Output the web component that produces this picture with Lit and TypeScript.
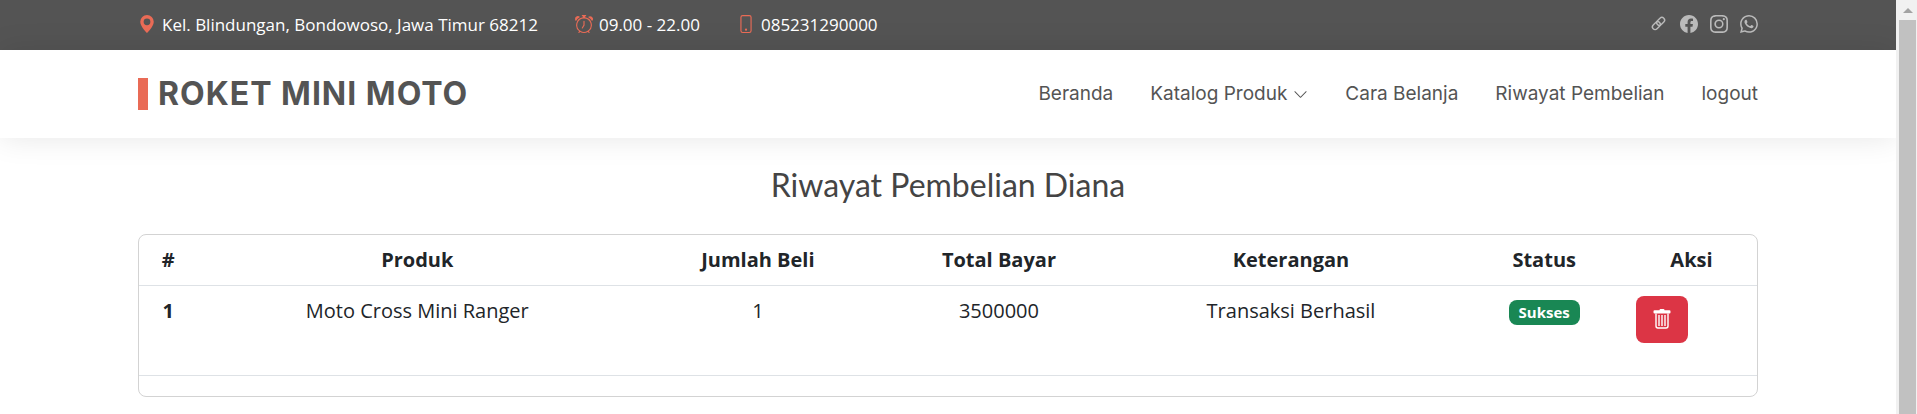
import { LitElement, html, css, svg } from "lit";
import { customElement } from "lit/decorators.js";

const icon = (size: number, body: unknown, box = 16) =>
  html`<svg class="icon" width=${size} height=${size} viewBox="0 0 ${box} ${box}" fill="currentColor" aria-hidden="true">${body}</svg>`;

const pin = svg`<path d="M8 16s6-5.686 6-10A6 6 0 0 0 2 6c0 4.314 6 10 6 10zm0-7a3 3 0 1 1 0-6 3 3 0 0 1 0 6z"/>`;
const alarm = svg`<path d="M8.5 5.5a.5.5 0 0 0-1 0v3.362l-1.429 2.38a.5.5 0 1 0 .858.515l1.5-2.5A.5.5 0 0 0 8.5 9V5.5z"/><path d="M6.5 0a.5.5 0 0 0 0 1H7v1.07a7.001 7.001 0 0 0-3.273 12.474l-.602.602a.5.5 0 0 0 .707.708l.746-.746A6.97 6.97 0 0 0 8 16a6.97 6.97 0 0 0 3.422-.892l.746.746a.5.5 0 0 0 .707-.708l-.601-.602A7.001 7.001 0 0 0 9 2.07V1h.5a.5.5 0 0 0 0-1h-3zm1.038 3.018a6.093 6.093 0 0 1 .924 0 6 6 0 1 1-.924 0zM0 3.5c0 .753.333 1.429.86 1.887A8.035 8.035 0 0 1 4.387 1.86 2.5 2.5 0 0 0 0 3.5zM13.5 1c-.753 0-1.429.333-1.887.86a8.035 8.035 0 0 1 3.527 3.527A2.5 2.5 0 0 0 13.5 1z"/>`;
const phone = svg`<path d="M11 1a1 1 0 0 1 1 1v12a1 1 0 0 1-1 1H5a1 1 0 0 1-1-1V2a1 1 0 0 1 1-1h6zM5 0a2 2 0 0 0-2 2v12a2 2 0 0 0 2 2h6a2 2 0 0 0 2-2V2a2 2 0 0 0-2-2H5z"/><path d="M8 14a1 1 0 1 0 0-2 1 1 0 0 0 0 2z"/>`;
const link = svg`<g fill="none" stroke="currentColor" stroke-width="1.4" transform="rotate(-45 8.5 8.5)"><rect x="1" y="5.800" width="9" height="5.400" rx="2.700"/><rect x="7" y="5.800" width="9" height="5.400" rx="2.700"/></g>`;
const facebook = svg`<path d="M16 8.049c0-4.446-3.582-8.05-8-8.05C3.580 0-.002 3.603-.002 8.050c0 4.017 2.926 7.347 6.750 7.951v-5.625h-2.030V8.050H6.750V6.275c0-2.017 1.195-3.131 3.022-3.131.876 0 1.791.157 1.791.157v1.980h-1.009c-.993 0-1.303.621-1.303 1.258v1.510h2.218l-.354 2.326H9.250V16c3.824-.604 6.750-3.934 6.750-7.951z"/>`;
const instagram = svg`<path d="M8 0C5.829 0 5.556.010 4.703.048 3.850.088 3.269.222 2.760.420a3.917 3.917 0 0 0-1.417.923A3.927 3.927 0 0 0 .420 2.760C.222 3.268.087 3.850.048 4.700.010 5.555 0 5.827 0 8.001c0 2.172.010 2.444.048 3.297.040.852.174 1.433.372 1.942.205.526.478.972.923 1.417.444.445.890.719 1.416.923.510.198 1.090.333 1.942.372C5.555 15.990 5.827 16 8 16s2.444-.010 3.298-.048c.851-.040 1.434-.174 1.943-.372a3.916 3.916 0 0 0 1.416-.923c.445-.445.718-.891.923-1.417.197-.509.332-1.090.372-1.942C15.990 10.445 16 10.173 16 8s-.010-2.445-.048-3.299c-.040-.851-.175-1.433-.372-1.941a3.926 3.926 0 0 0-.923-1.417A3.911 3.911 0 0 0 13.240.420c-.510-.198-1.092-.333-1.943-.372C10.443.010 10.172 0 7.998 0h.003zm-.717 1.442h.718c2.136 0 2.389.007 3.232.046.780.035 1.204.166 1.486.275.373.145.640.319.920.599.280.280.453.546.598.920.110.281.240.705.275 1.485.039.843.047 1.096.047 3.231s-.008 2.389-.047 3.232c-.035.780-.166 1.203-.275 1.485a2.470 2.470 0 0 1-.599.919c-.280.280-.546.453-.920.598-.280.110-.704.240-1.485.276-.843.038-1.096.047-3.232.047s-2.390-.009-3.233-.047c-.780-.036-1.203-.166-1.485-.276a2.478 2.478 0 0 1-.920-.598 2.480 2.480 0 0 1-.600-.920c-.109-.281-.240-.705-.275-1.485-.038-.843-.046-1.096-.046-3.233 0-2.136.008-2.388.046-3.231.036-.780.166-1.204.276-1.486.145-.373.319-.640.599-.920.280-.280.546-.453.920-.598.282-.110.705-.240 1.485-.276.738-.034 1.024-.044 2.515-.045v.002zm4.988 1.328a.960.960 0 1 0 0 1.920.960.960 0 0 0 0-1.920zm-4.270 1.122a4.109 4.109 0 1 0 0 8.217 4.109 4.109 0 0 0 0-8.217zm0 1.441a2.667 2.667 0 1 1 0 5.334 2.667 2.667 0 0 1 0-5.334z"/>`;
const whatsapp = svg`<path d="M13.601 2.326A7.854 7.854 0 0 0 7.994 0C3.627 0 .068 3.558.064 7.926c0 1.399.366 2.760 1.057 3.965L0 16l4.204-1.102a7.933 7.933 0 0 0 3.790.965h.004c4.368 0 7.926-3.558 7.930-7.930A7.898 7.898 0 0 0 13.600 2.326zM7.994 14.521a6.573 6.573 0 0 1-3.356-.920l-.240-.144-2.494.654.666-2.433-.156-.251a6.560 6.560 0 0 1-1.007-3.505c0-3.626 2.957-6.584 6.591-6.584a6.560 6.560 0 0 1 4.660 1.931 6.557 6.557 0 0 1 1.928 4.660c-.004 3.639-2.961 6.592-6.592 6.592zm3.615-4.934c-.197-.099-1.170-.578-1.353-.646-.182-.065-.315-.099-.445.099-.133.197-.513.646-.627.775-.114.133-.232.148-.430.050-.197-.100-.836-.308-1.592-.985-.590-.525-.985-1.175-1.103-1.372-.114-.198-.011-.304.088-.403.087-.088.197-.232.296-.346.100-.114.133-.198.198-.330.065-.134.034-.248-.015-.347-.050-.099-.445-1.076-.612-1.470-.160-.389-.323-.335-.445-.340-.114-.007-.247-.007-.380-.007a.729.729 0 0 0-.529.247c-.182.198-.691.677-.691 1.654 0 .977.710 1.916.810 2.049.098.133 1.394 2.132 3.383 2.992.470.205.840.326 1.129.418.475.152.904.129 1.246.080.380-.058 1.171-.480 1.338-.943.164-.464.164-.860.114-.943-.049-.084-.182-.133-.380-.232z"/>`;
const chevron = svg`<path fill-rule="evenodd" d="M1.646 4.646a.5.5 0 0 1 .708 0L8 10.293l5.646-5.647a.5.5 0 0 1 .708.708l-6 6a.5.5 0 0 1-.708 0l-6-6a.5.5 0 0 1 0-.708z"/>`;
const trash = svg`<path d="M7.500 1.200Q7.500 0 8.500 0h3q1 0 1 1.200H17.500q1 0 1 1V3.500q0 1-1 1h-15q-1 0-1-1V2.200q0-1 1-1z"/><path fill="none" stroke="currentColor" stroke-width="1.400" d="M4 4.500V17a2 2 0 0 0 2 2h8a2 2 0 0 0 2-2V4.500M7 6v11M10 6v11M13 6v11"/>`;

@customElement("app-root")
export class AppRoot extends LitElement {
  static styles = css`
    :host {
      display: grid;
      grid-template-columns: minmax(0, 1fr) 21px;
      min-height: 100vh;
      background: #fff;
      color: #212529;
      font: 20px/30px "Open Sans", sans-serif;
    }
    * { box-sizing: border-box; }
    a { color: inherit; text-decoration: none; }
    .icon { display: block; flex: none; }
    .container {
      width: 100%;
      max-width: 1650px;
      margin: 0 auto;
      padding: 0 15px;
    }
    .bar {
      display: flex;
      align-items: center;
      justify-content: space-between;
    }
    .topbar { background: #545454; color: #fff; }
    .topbar .bar { height: 50px; }
    .topbar .icon { margin-bottom: 2px; }
    .contact, .social, .menu {
      display: flex;
      align-items: center;
      margin: 0;
      padding: 0;
      list-style: none;
    }
    .contact { gap: 37px; font-size: 17px; font-style: normal; }
    .contact-item { display: flex; align-items: center; gap: 6px; }
    .contact-item .icon { color: #e96b56; }
    .social { gap: 12px; color: #bababa; }
    .header { box-shadow: 0 0 31px rgba(0, 0, 0, 0.1); }
    .header .bar { height: 88px; }
    .logo {
      margin: 0;
      padding-left: 10px;
      border-left: 10px solid #e96b56;
      color: #545454;
      font: 700 32px/32px Inter, sans-serif;
      letter-spacing: 1px;
    }
    .menu {
      gap: 37px;
      color: #545454;
      font: 19px/28px Inter, sans-serif;
    }
    .menu a { display: flex; align-items: center; gap: 6px; }
    .title {
      margin: 0;
      padding: 29px 0 31px;
      color: #444;
      font: 400 32px/36px Lato, sans-serif;
      text-align: center;
    }
    .card {
      border: 1px solid #d3d3d3;
      border-radius: 8px;
      padding-bottom: 20px;
    }
    table { width: 100%; table-layout: fixed; border-collapse: collapse; }
    th, td {
      padding: 10px;
      border-bottom: 1px solid #dee2e6;
      text-align: center;
      vertical-align: top;
    }
    th { font-weight: 700; }
    .c-no { width: 3.6%; }
    .c-product { width: 27.2%; }
    .c-qty { width: 14.9%; }
    .c-total { width: 14.9%; }
    .c-note { width: 21.2%; }
    .c-status { width: 10.1%; }
    .c-action { width: 8.1%; }
    .badge {
      display: inline-block;
      padding: 5px 10px;
      border-radius: 8px;
      background: #198754;
      color: #fff;
      font-size: 15px;
      font-weight: 700;
      line-height: 15px;
    }
    .delete {
      display: flex;
      align-items: center;
      justify-content: center;
      width: 52px;
      height: 47px;
      margin: 0 0 22px;
      padding: 0 0 2px;
      border: 0;
      border-radius: 8px;
      background: #dc3545;
      color: #fff;
    }
    .scrollbar {
      display: flex;
      flex-direction: column;
      gap: 7px;
      padding: 8px 1px 0 3px;
      background: #f1f1f1;
    }
    .arrow { display: block; margin: 0 auto; fill: #a3a3a3; }
    .thumb { flex: 1; background: #c1c1c1; }
  `;

  private rows = [
    { product: "Moto Cross Mini Ranger", qty: 1, total: 3500000, note: "Transaksi Berhasil", status: "Sukses" },
  ];

  render() {
    return html`
      <div class="page">
        <section class="topbar">
          <div class="container bar">
            <address class="contact">
              <span class="contact-item">${icon(18, pin)}Kel. Blindungan, Bondowoso, Jawa Timur 68212</span>
              <span class="contact-item">${icon(18, alarm)}09.00 - 22.00</span>
              <span class="contact-item">${icon(18, phone)}085231290000</span>
            </address>
            <div class="social">
              <a href="#" aria-label="Link">${icon(18, link, 18)}</a>
              <a href="#" aria-label="Facebook">${icon(18, facebook)}</a>
              <a href="#" aria-label="Instagram">${icon(18, instagram)}</a>
              <a href="#" aria-label="WhatsApp">${icon(18, whatsapp)}</a>
            </div>
          </div>
        </section>
        <header class="header">
          <div class="container bar">
            <h1 class="logo"><a href="#">ROKET MINI MOTO</a></h1>
            <nav>
              <ul class="menu">
                <li><a href="#">Beranda</a></li>
                <li><a href="#">Katalog Produk ${icon(15, chevron)}</a></li>
                <li><a href="#">Cara Belanja</a></li>
                <li><a href="#">Riwayat Pembelian</a></li>
                <li><a href="#">logout</a></li>
              </ul>
            </nav>
          </div>
        </header>
        <main class="container">
          <h2 class="title">Riwayat Pembelian Diana</h2>
          <div class="card">
            <table>
              <colgroup>
                <col class="c-no" /><col class="c-product" /><col class="c-qty" /><col class="c-total" />
                <col class="c-note" /><col class="c-status" /><col class="c-action" />
              </colgroup>
              <thead>
                <tr>
                  <th scope="col">#</th>
                  <th scope="col">Produk</th>
                  <th scope="col">Jumlah Beli</th>
                  <th scope="col">Total Bayar</th>
                  <th scope="col">Keterangan</th>
                  <th scope="col">Status</th>
                  <th scope="col">Aksi</th>
                </tr>
              </thead>
              <tbody>
                ${this.rows.map(
                  (row, i) => html`<tr>
                    <th scope="row">${i + 1}</th>
                    <td>${row.product}</td>
                    <td>${row.qty}</td>
                    <td>${row.total}</td>
                    <td>${row.note}</td>
                    <td><span class="badge">${row.status}</span></td>
                    <td><button class="delete" type="button" aria-label="Hapus">${icon(20, trash, 20)}</button></td>
                  </tr>`
                )}
              </tbody>
            </table>
          </div>
        </main>
      </div>
      <div class="scrollbar" aria-hidden="true">
        <svg class="arrow" width="10" height="5" viewBox="0 0 10 5"><path d="M0 5 5 0l5 5z" /></svg>
        <div class="thumb"></div>
      </div>
    `;
  }
}
